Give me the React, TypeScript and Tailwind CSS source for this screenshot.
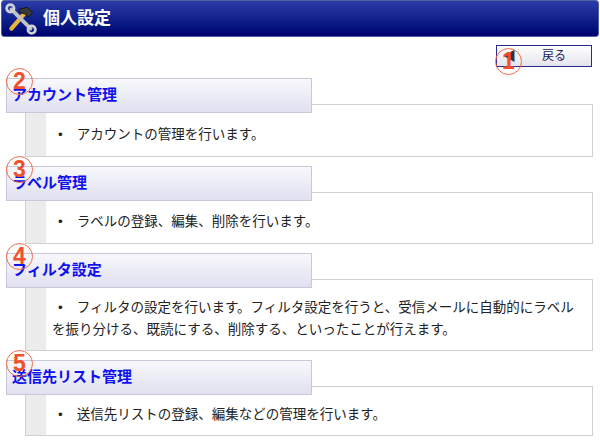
const font = { fontFamily: '"Liberation Sans", "Noto Sans CJK JP", sans-serif' };

function Num({ n, className }: { n: number; className: string }) {
  return (
    <span
      className={`absolute z-20 flex h-[27px] w-[27px] items-center justify-center rounded-full border-[1.5px] border-[#f36a4a] text-[23px] font-bold leading-none text-[#f0502e] ${className}`}
    >
      {n}
    </span>
  );
}

function ToolIcon() {
  return (
    <svg width="32" height="32" viewBox="0 0 30 30">
      <path d="M6 24 L19 9" stroke="#e9b43a" strokeWidth="4" strokeLinecap="round" />
      <path d="M13 6 L21 4 L26 9 L22 13 L18 10 L14 9 Z" fill="#3a3a3a" stroke="#111" strokeWidth="0.8" />
      <path d="M6 6 L24 24" stroke="#bfc3c8" strokeWidth="3.5" strokeLinecap="round" />
      <circle cx="5" cy="5" r="3.5" fill="none" stroke="#cfd3d8" strokeWidth="2.5" />
      <circle cx="25" cy="25" r="3.5" fill="none" stroke="#cfd3d8" strokeWidth="2.5" />
    </svg>
  );
}

function Section({ n, title, children, h }: { n: number; title: string; children: React.ReactNode; h: string }) {
  return (
    <div className="relative">
      <Num n={n} className="left-[6px] top-[-10px]" />
      <div className="relative z-10 ml-[6px] flex h-[35px] w-[306px] items-center border border-[#c8c8d8] bg-gradient-to-b from-[#f8f8fc] to-[#e0e0f0] pl-[5px] text-[15px] font-bold text-[#1010ee]">
        {title}
      </div>
      <div className={`ml-[25px] mr-[7px] mt-[-9px] flex border border-[#d0d0d0] bg-white ${h}`}>
        <div className="w-[20px] shrink-0 bg-[#ececec]" />
        <div className="flex flex-1 items-center pl-[6px] pr-[10px] pt-[8px] text-[13.5px] leading-[22px] text-[#222]">
          {children}
        </div>
      </div>
    </div>
  );
}

export default function App() {
  return (
    <div style={font} className="h-[441px] w-[600px] overflow-hidden bg-white">
      <div className="mx-[1px] flex h-[37px] items-center gap-[6px] rounded-[3px] border border-[#5060a0] bg-gradient-to-b from-[#2b3ba8] to-[#000070] pl-[3px]">
        <ToolIcon />
        <span className="text-[17px] font-bold text-white">個人設定</span>
      </div>
      <div className="relative mr-[8px] mt-[8px] flex justify-end">
        <Num n={1} className="right-[70px] top-[3px]" />
        <button className="flex h-[22px] w-[96px] items-center border border-[#2a2a8a] bg-gradient-to-b from-white to-[#e4e4ec] pl-[6px] text-[12px] text-[#1a1a5a]">
          <span className="text-[13px] font-bold text-[#333]">◀</span>
          <span className="ml-[26px]">戻る</span>
        </button>
      </div>
      <div className="mt-[11px] flex flex-col gap-[9px]">
        <Section n={2} title="アカウント管理" h="h-[53px]">
          <span className="mr-[14px] ml-[6px]">•</span>アカウントの管理を行います。
        </Section>
        <Section n={3} title="ラベル管理" h="h-[52px]">
          <span className="mr-[14px] ml-[6px]">•</span>ラベルの登録、編集、削除を行います。
        </Section>
        <Section n={4} title="フィルタ設定" h="h-[72px]">
          <div>
            <span className="mr-[14px] ml-[6px]">•</span>フィルタの設定を行います。フィルタ設定を行うと、受信メールに自動的にラベルを振り分ける、既読にする、削除する、といったことが行えます。
          </div>
        </Section>
        <Section n={5} title="送信先リスト管理" h="h-[50px]">
          <span className="mr-[14px] ml-[6px]">•</span>送信先リストの登録、編集などの管理を行います。
        </Section>
      </div>
    </div>
  );
}
